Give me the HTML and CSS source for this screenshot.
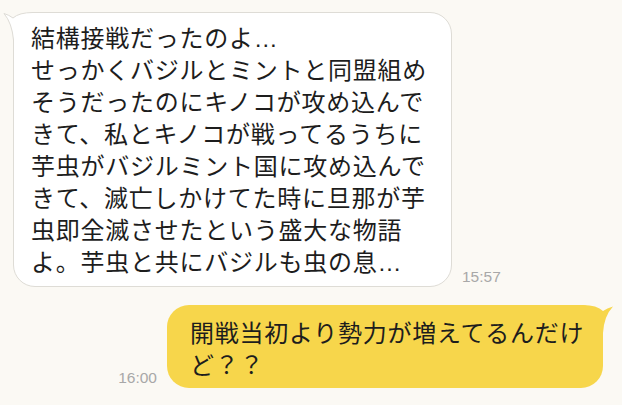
FILE: index.html
```html
<!DOCTYPE html>
<html lang="ja">
<head>
    <meta charset="UTF-8">
    <meta name="viewport" content="width=device-width, initial-scale=1.0">
    <title>トーク</title>
    <link rel="stylesheet" href="styles.css">
</head>
<body>
    <div class="chat">
        <div class="row row-in">
            <div class="bubble bubble-in">
                <svg class="tail tail-in" width="40" height="34" viewBox="0 0 40 34">
                    <path d="M40 0.5 L32 0.5 Q18 0.5 12 6 Q8 3 3 1.5 Q11 11 12.5 28 L12.5 34 L40 34 Z" fill="#fff"/>
                    <path d="M40 0.5 L32 0.5 Q18 0.5 12 6 Q8 3 3 1.5 Q11 11 12.5 28 L12.5 34" fill="none" stroke="#dedcd6" stroke-width="1"/>
                </svg>
                <p class="text">結構接戦だったのよ<span class="ell">…</span><br>
                せっかくバジルとミントと同盟組め<br>
                そうだったのにキノコが攻め込んで<br>
                きて、私とキノコが戦ってるうちに<br>
                芋虫がバジルミント国に攻め込んで<br>
                きて、滅亡しかけてた時に旦那が芋<br>
                虫即全滅させたという盛大な物語<br>
                よ。芋虫と共にバジルも虫の息<span class="ell">…</span></p>
            </div>
            <span class="time">15:57</span>
        </div>

        <div class="row row-out">
            <span class="time">16:00</span>
            <div class="bubble bubble-out">
                <svg class="tail tail-out" width="40" height="34" viewBox="0 0 40 34">
                    <path d="M0 0 L8 0 Q22 0 28 6 Q32 3 38 1.5 Q29 11 28 28 L28 34 L0 34 Z" fill="#f7d64b"/>
                </svg>
                <p class="text">開戦当初より勢力が増えてるんだけ<br>
                ど？？</p>
            </div>
        </div>
    </div>
</body>
</html>
```

FILE: styles.css
```css
body {
    margin: 0;
    background-color: #fbf9f4;
    font-family: "Noto Sans CJK JP", "Noto Sans", sans-serif;
}
.chat {
    padding-top: 12px;
}
.row {
    display: flex;
    align-items: flex-end;
    gap: 10px;
}
.row-in {
    padding-left: 13px;
}
.row-out {
    justify-content: flex-end;
    padding-right: 19px;
    margin-top: 18px;
}
.bubble {
    position: relative;
    box-sizing: border-box;
    border-radius: 22px;
    font-size: 24px;
    line-height: 32px;
    letter-spacing: 0.75px;
    color: #1d1d1d;
    white-space: nowrap;
}
.text {
    position: relative;
    z-index: 1;
    margin: 0;
}
.ell {
    font-family: "Liberation Sans", Arial, sans-serif;
    line-height: 0;
}
.bubble-in {
    width: 439px;
    padding: 8px 10px 9px 17px;
    background: #fff;
    border: 1px solid #dedcd6;
}
.bubble-out {
    width: 436px;
    padding: 11px 10px 8px 23px;
    background: #f7d64b;
}
.tail {
    position: absolute;
    top: -1px;
}
.tail-in {
    left: -13px;
}
.tail-out {
    top: 0;
    right: -12px;
}
.time {
    font-family: "Liberation Sans", Arial, sans-serif;
    font-size: 15.5px;
    line-height: 16px;
    color: #a8a8a8;
    margin-bottom: 2px;
}
```
